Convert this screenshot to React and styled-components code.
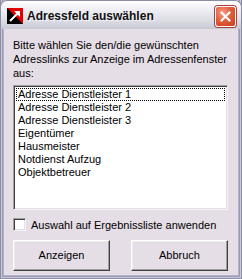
import styled, { createGlobalStyle } from 'styled-components';

const GlobalStyle = createGlobalStyle`
    html, body {
        margin: 0;
        padding: 0;
        background: #e6dee6;
    }
`

const items = [
    'Adresse Dienstleister 1',
    'Adresse Dienstleister 2',
    'Adresse Dienstleister 3',
    'Eigentümer',
    'Hausmeister',
    'Notdienst Aufzug',
    'Objektbetreuer',
];

const App = () => {
    return (
        <>
            <GlobalStyle />
            <Window>
                <TitleBar>
                    <AppIcon />
                    <Title>Adressfeld auswählen</Title>
                    <CloseButton />
                </TitleBar>
                <Client>
                    <Intro>
                        Bitte wählen Sie den/die gewünschten<br />
                        Adresslinks zur Anzeige im Adressenfenster<br />
                        aus:
                    </Intro>
                    <ListBox>
                        {items.map((item, i) => (
                            <ListItem key={item} focused={i === 0}>{item}</ListItem>
                        ))}
                    </ListBox>
                    <CheckRow>
                        <CheckBox />
                        <span>Auswahl auf Ergebnissliste anwenden</span>
                    </CheckRow>
                    <ButtonRow>
                        <DialogButton>Anzeigen</DialogButton>
                        <DialogButton>Abbruch</DialogButton>
                    </ButtonRow>
                </Client>
            </Window>
        </>
    )
}

const AppIcon = () => {
    return (
        <IconBox>
            <svg width="16" height="16" viewBox="0 0 16 16">
                <rect width="16" height="16" fill="#000" />
                <polygon points="0,0 16,0 16,16" fill="#e00000" />
                <line x1="3" y1="13" x2="11" y2="5" stroke="#fff" strokeWidth="2" />
                <polygon points="7,3 13,3 13,9" fill="#fff" />
            </svg>
        </IconBox>
    )
}

const CloseButton = () => {
    return (
        <CloseWrapper>
            <svg width="11" height="11" viewBox="0 0 11 11">
                <path d="M1.5 1.5 L9.5 9.5 M9.5 1.5 L1.5 9.5" stroke="#fff" strokeWidth="2.2" strokeLinecap="round" />
            </svg>
        </CloseWrapper>
    )
}

const Window = styled.div`
    width: 242px;
    height: 279px;
    box-sizing: border-box;
    display: flex;
    flex-direction: column;
    background: #e6dee6;
    border: 1px solid #8c8ca4;
    border-top: none;
    box-shadow: inset 1px 0 0 #c8c8d6, inset -1px 0 0 #c8c8d6, inset 0 -1px 0 #c8c8d6,
        inset 2px 0 0 #9a9ab6, inset -2px 0 0 #9a9ab6, inset 0 -2px 0 #9a9ab6,
        inset 3px 0 0 #b4b4c8, inset -3px 0 0 #b4b4c8, inset 0 -3px 0 #b4b4c8;
    font-family: "Liberation Sans", Arial, sans-serif;
    font-size: 11px;
    color: #000;
    overflow: hidden;
`

const TitleBar = styled.div`
    height: 29px;
    flex: none;
    display: flex;
    align-items: center;
    padding: 0 5px 0 6px;
    box-sizing: border-box;
    margin: 0 -1px;
    border: 1px solid #8c8ca4;
    border-bottom: none;
    border-radius: 7px 7px 0 0;
    background: linear-gradient(#ffffff 0%, #eeeef4 30%, #dcdce4 70%, #c8c8d4 100%);
`

const IconBox = styled.div`
    width: 16px;
    height: 16px;
    flex: none;
    margin-top: 2px;

    svg {
        display: block;
    }
`

const Title = styled.div`
    flex: 1;
    margin-left: 4px;
    margin-top: 1px;
    font-family: "Liberation Sans", Arial, sans-serif;
    font-weight: bold;
    font-size: 12px;
    color: #101010;
    text-shadow: 1px 1px 0 #f4f4f8;
`

const CloseWrapper = styled.div`
    width: 21px;
    height: 21px;
    box-sizing: border-box;
    display: flex;
    align-items: center;
    justify-content: center;
    border: 1px solid #ffffff;
    border-radius: 3px;
    background: radial-gradient(circle at 35% 30%, #f4a08a 0%, #e0603c 45%, #c83a1c 100%);
    box-shadow: 0 0 0 1px #a04040;
    margin-top: 2px;
`

const Client = styled.div`
    flex: 1;
    display: flex;
    flex-direction: column;
    padding: 9px 13px 0 12px;
`

const Intro = styled.p`
    margin: 0;
    line-height: 14px;
    white-space: nowrap;
`

const ListBox = styled.div`
    margin-top: 5px;
    height: 125px;
    box-sizing: border-box;
    background: #ffffff;
    border-top: 1px solid #a0a0a0;
    border-left: 1px solid #a0a0a0;
    border-right: 1px solid #f4f4f4;
    border-bottom: 1px solid #f4f4f4;
    box-shadow: inset 1px 1px 0 #404040, inset -1px -1px 0 #e6dee6;
    padding: 2px 2px;
`

const ListItem = styled.div`
    height: 13px;
    line-height: 13px;
    padding-left: 2px;
    box-sizing: border-box;
    white-space: nowrap;
    outline: ${props => props.focused ? '1px dotted #000' : 'none'};
    outline-offset: -1px;
`

const CheckRow = styled.div`
    display: flex;
    align-items: center;
    gap: 5px;
    margin-top: 8px;
    height: 13px;
`

const CheckBox = styled.div`
    width: 13px;
    height: 13px;
    box-sizing: border-box;
    background: #ffffff;
    border-top: 1px solid #a0a0a0;
    border-left: 1px solid #a0a0a0;
    border-right: 1px solid #f4f4f4;
    border-bottom: 1px solid #f4f4f4;
    box-shadow: inset 1px 1px 0 #404040, inset -1px -1px 0 #e6dee6;
`

const ButtonRow = styled.div`
    display: flex;
    justify-content: space-between;
    margin-top: 9px;
`

const DialogButton = styled.div`
    width: 97px;
    height: 31px;
    box-sizing: border-box;
    display: flex;
    align-items: center;
    justify-content: center;
    background: #e6dee6;
    border-top: 1px solid #ffffff;
    border-left: 1px solid #ffffff;
    border-right: 1px solid #404040;
    border-bottom: 1px solid #404040;
    box-shadow: inset -1px -1px 0 #a0a0a0, inset 1px 1px 0 #f0ecf0;
    padding-bottom: 1px;
`

export default App;
